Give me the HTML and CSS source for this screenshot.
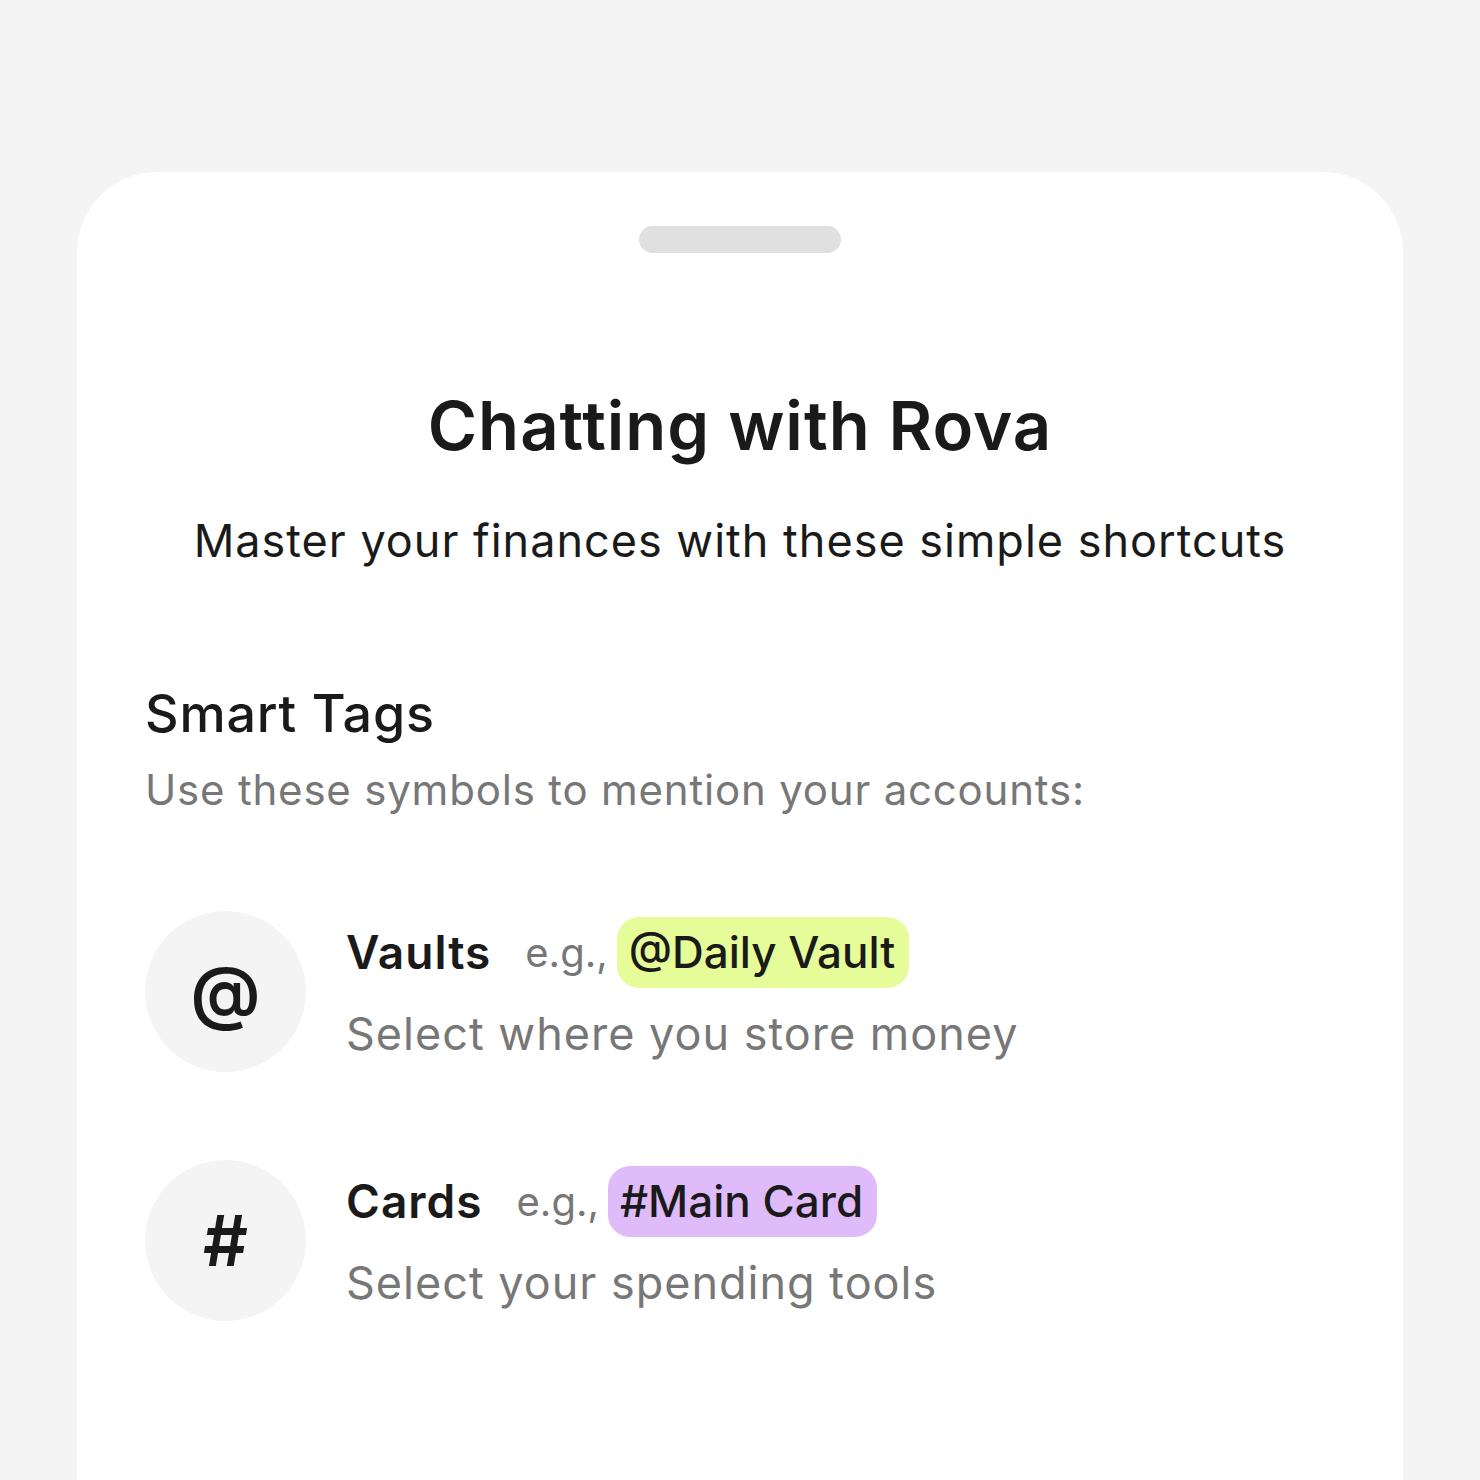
FILE: index.html
```html
<!DOCTYPE html>
<html lang="en">
<head>
    <meta charset="UTF-8">
    <meta name="viewport" content="width=device-width, initial-scale=1.0">
    <title>Chatting with Rova</title>
    <link rel="stylesheet" href="styles.css">
</head>
<body>
    <div class="sheet">
        <div class="handle"></div>

        <h1 class="title">Chatting with Rova</h1>
        <p class="subtitle">Master your finances with these simple shortcuts</p>

        <section class="tags">
            <h2 class="tags-title">Smart Tags</h2>
            <p class="tags-hint">Use these symbols to mention your accounts:</p>

            <div class="tag-row">
                <div class="tag-icon">@</div>
                <div class="tag-body">
                    <div class="tag-head">
                        <span class="tag-name">Vaults</span>
                        <span class="tag-eg">e.g.,</span>
                        <span class="pill pill-vault">@Daily Vault</span>
                    </div>
                    <div class="tag-desc">Select where you store money</div>
                </div>
            </div>

            <div class="tag-row">
                <div class="tag-icon">#</div>
                <div class="tag-body">
                    <div class="tag-head">
                        <span class="tag-name">Cards</span>
                        <span class="tag-eg">e.g.,</span>
                        <span class="pill pill-card">#Main Card</span>
                    </div>
                    <div class="tag-desc">Select your spending tools</div>
                </div>
            </div>
        </section>
    </div>
</body>
</html>
```

FILE: styles.css
```css
html, body {
    height: 100%;
}
body {
    margin: 0;
    background-color: #f4f4f4;
    font-family: Inter, "Noto Sans", sans-serif;
    color: #1a1a1a;
    overflow: hidden;
}
.sheet {
    margin: 172px 77px 0 77px;
    background-color: #fff;
    border-radius: 80px 80px 0 0;
    height: 1400px;
    padding: 54px 68px 0 68px;
    box-sizing: border-box;
}
.handle {
    width: 202px;
    height: 27px;
    margin: 0 auto;
    border-radius: 14px;
    background-color: #e0e0e0;
}
.title {
    margin: 133px 0 0 0;
    text-align: center;
    font-size: 67px;
    font-weight: 600;
    letter-spacing: 1px;
    line-height: 80px;
}
.subtitle {
    margin: 47px 0 0 0;
    text-align: center;
    font-size: 45px;
    letter-spacing: 1px;
    line-height: 56px;
    font-weight: 400;
}
.tags {
    margin-top: 115px;
}
.tags-title {
    margin: 0;
    font-size: 52px;
    font-weight: 500;
    letter-spacing: 0.8px;
    line-height: 60px;
}
.tags-hint {
    margin: 20px 0 0 0;
    font-size: 42px;
    letter-spacing: 0.8px;
    line-height: 52px;
    color: #777;
}
.tag-row {
    display: flex;
    align-items: center;
    gap: 40px;
    margin-top: 95px;
}
.tag-row + .tag-row {
    margin-top: 88px;
}
.tag-icon {
    flex: none;
    width: 161px;
    height: 161px;
    border-radius: 50%;
    background-color: #f4f4f4;
    display: flex;
    align-items: center;
    justify-content: center;
    font-size: 70px;
    font-weight: 600;
}
.tag-body {
    padding-bottom: 5px;
}
.tag-head {
    display: flex;
    align-items: center;
    gap: 9px;
}
.tag-name {
    font-size: 46px;
    font-weight: 600;
    letter-spacing: 1px;
    margin-right: 25px;
}
.tag-eg {
    font-size: 40px;
    color: #777;
}
.pill {
    font-size: 44px;
    font-weight: 500;
    line-height: 56px;
    padding: 7px 14px 8px 12px;
    border-radius: 22px;
}
.pill-vault {
    background-color: #e6fc98;
}
.pill-card {
    background-color: #dfbcf9;
}
.tag-desc {
    margin-top: 18px;
    font-size: 45px;
    letter-spacing: 1px;
    line-height: 56px;
    color: #777;
}
```
